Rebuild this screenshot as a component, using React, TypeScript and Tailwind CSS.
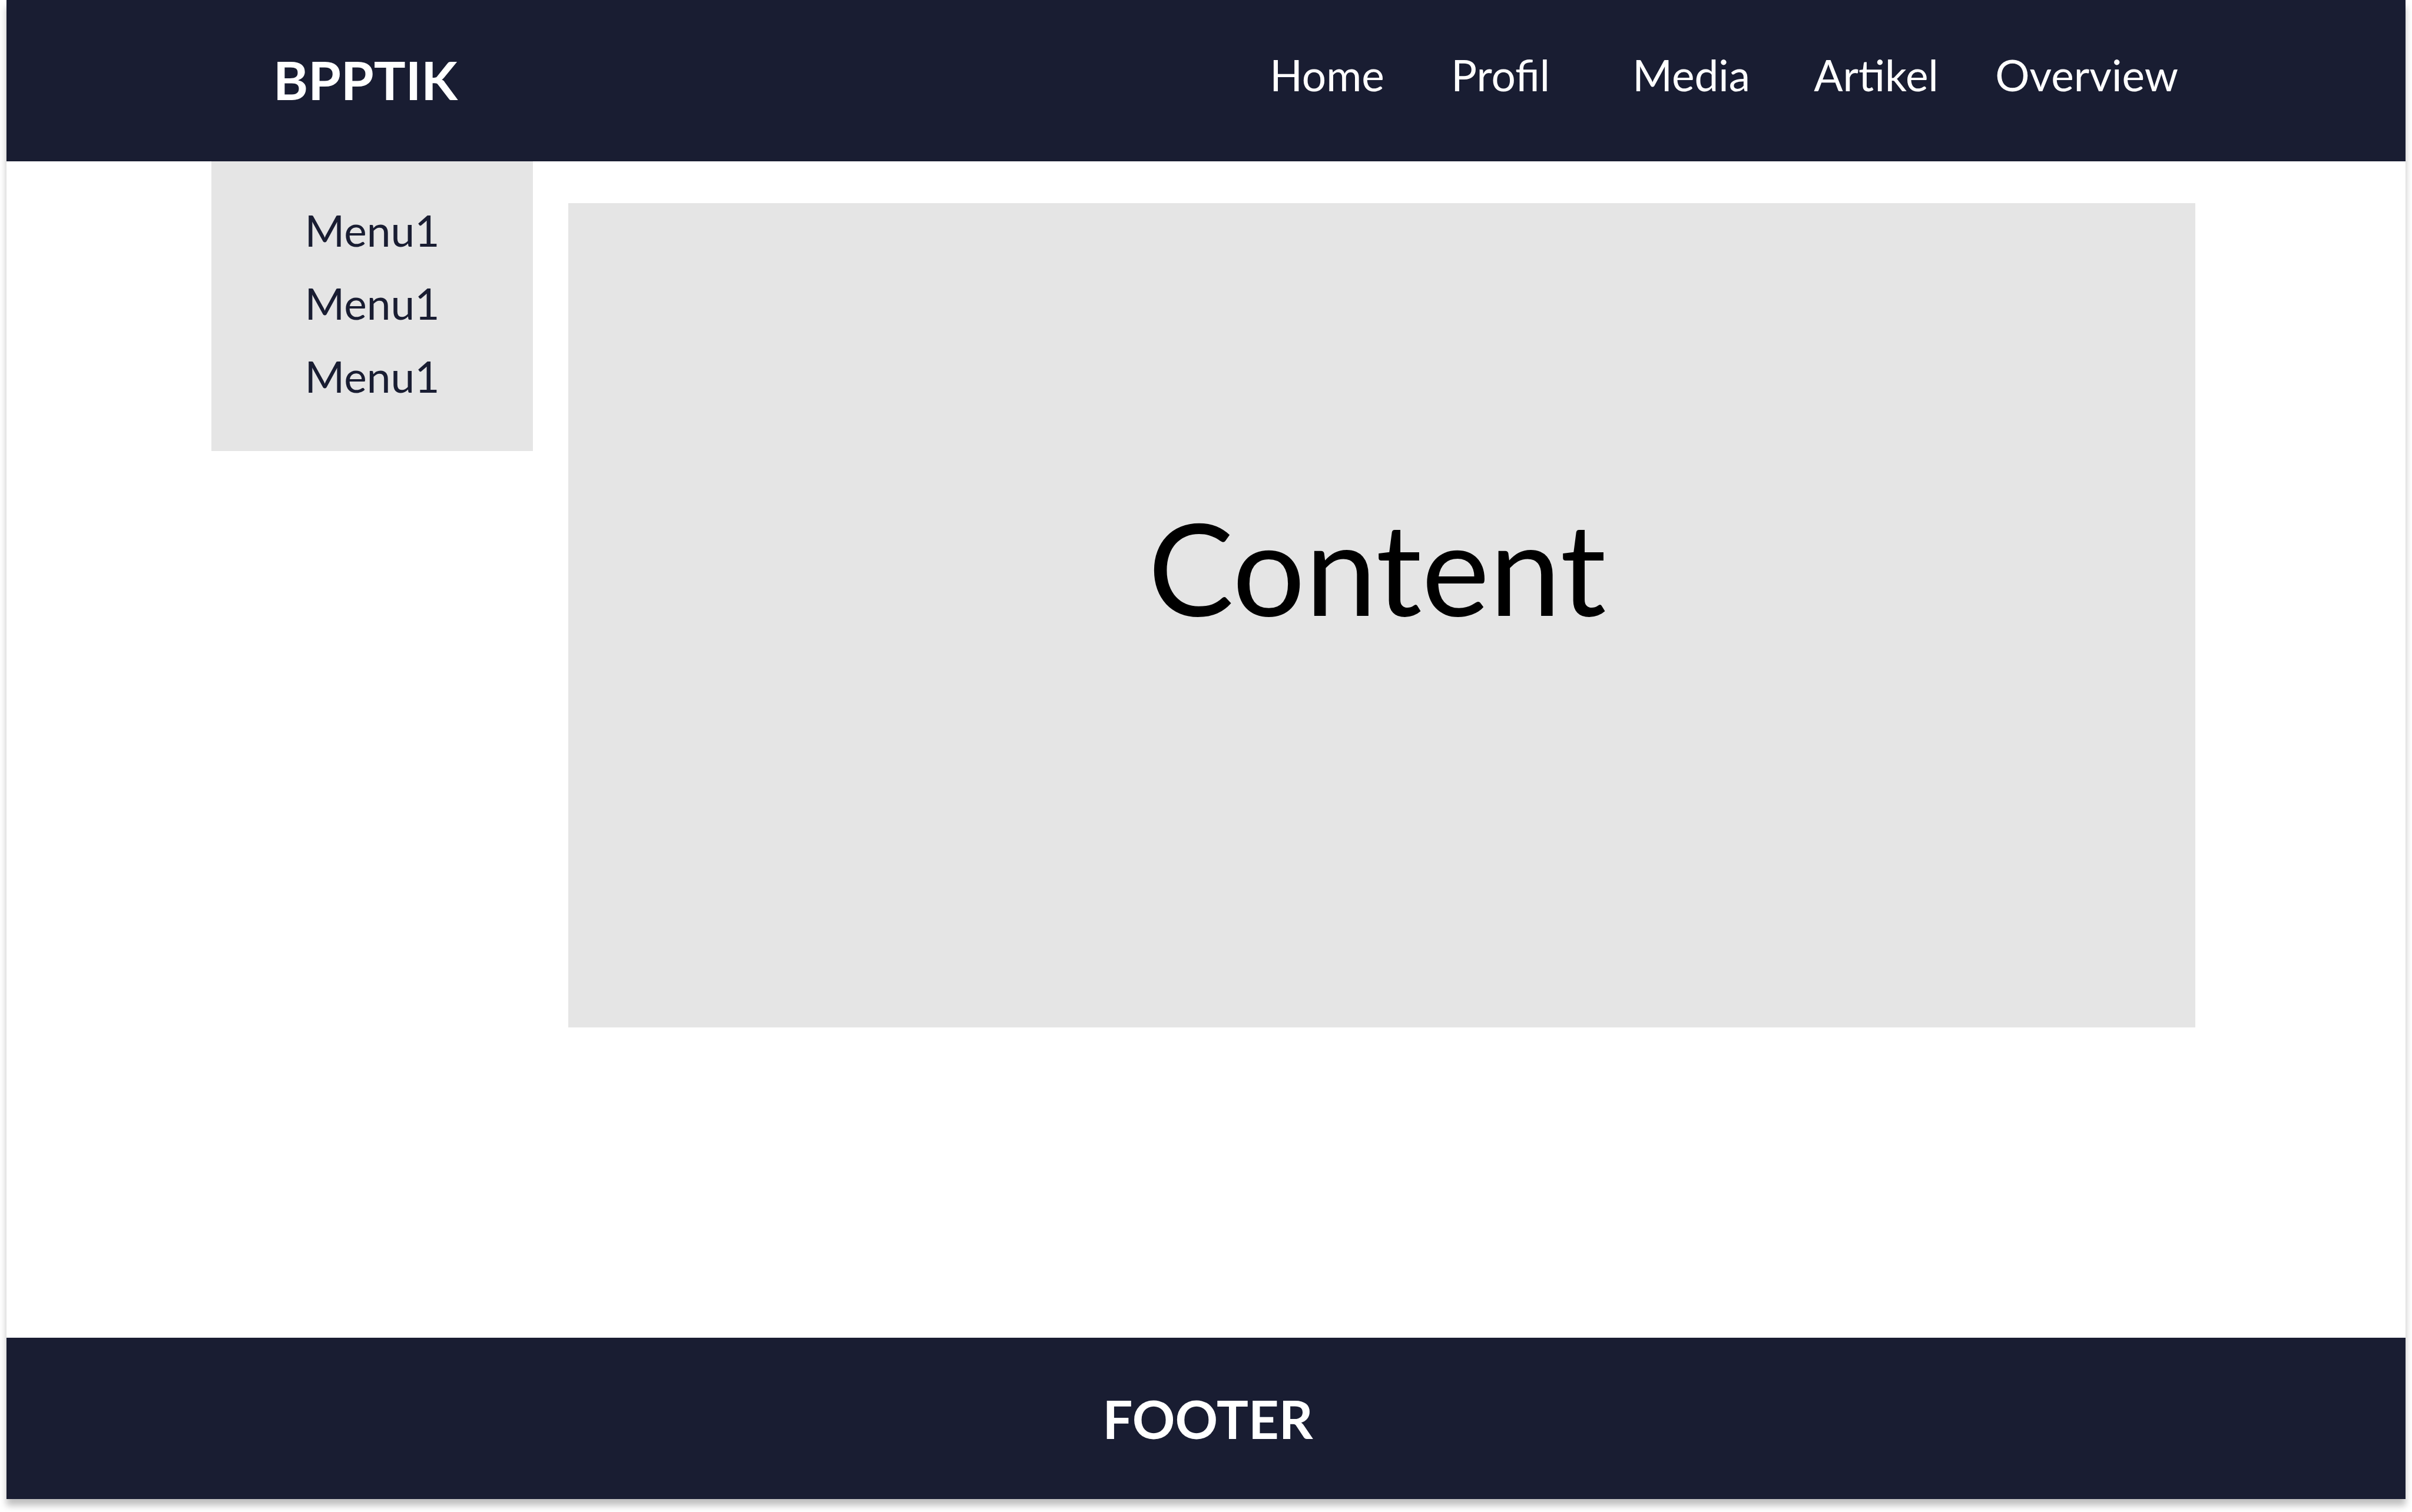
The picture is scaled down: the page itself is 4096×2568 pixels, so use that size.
const navItems = ['Home', 'Profil', 'Media', 'Artikel', 'Overview'];
const menuItems = ['Menu1', 'Menu1', 'Menu1'];

export default function App() {
  return (
    <div className="flex min-h-screen flex-col bg-white px-[11px] pb-[22px] font-['Lato',sans-serif]">
      <div className="flex flex-1 flex-col bg-white shadow-[0_11px_11px_rgba(0,0,0,0.25)]">
        <header className="flex items-start justify-between bg-[#191d32] pt-[83px] pr-[386px] pb-[87px] pl-[453px] text-white">
          <a href="#" className="text-[90px] leading-[104px] font-bold">
            BPPTIK
          </a>
          <nav className="grid grid-cols-[repeat(4,308px)_auto] text-[73px] leading-[88px]">
            {navItems.map((label) => (
              <a key={label} href={`#${label.toLowerCase()}`}>
                {label}
              </a>
            ))}
          </nav>
        </header>

        <div className="flex flex-1 items-start gap-[60px] pr-[357px] pl-[348px]">
          <aside className="w-[546px] shrink-0 bg-[#e5e5e5] pt-[73px] pb-[83px]">
            <ul className="flex flex-col items-center gap-9 text-[73px] leading-[88px] text-[#191d32]">
              {menuItems.map((label, index) => (
                <li key={index}>
                  <a href={`#menu-${index + 1}`}>{label}</a>
                </li>
              ))}
            </ul>
          </aside>
          <main className="mt-[71px] min-h-[1400px] flex-1 bg-[#e5e5e5] pt-[481px] pr-[16px] text-center">
            <h1 className="text-[218px] leading-[272px] text-black">Content</h1>
          </main>
        </div>

        <footer className="bg-[#191d32] pt-[83px] pb-[83px] pl-[6px] text-center text-[90px] leading-[108px] font-bold text-white">
          FOOTER
        </footer>
      </div>
    </div>
  );
}
